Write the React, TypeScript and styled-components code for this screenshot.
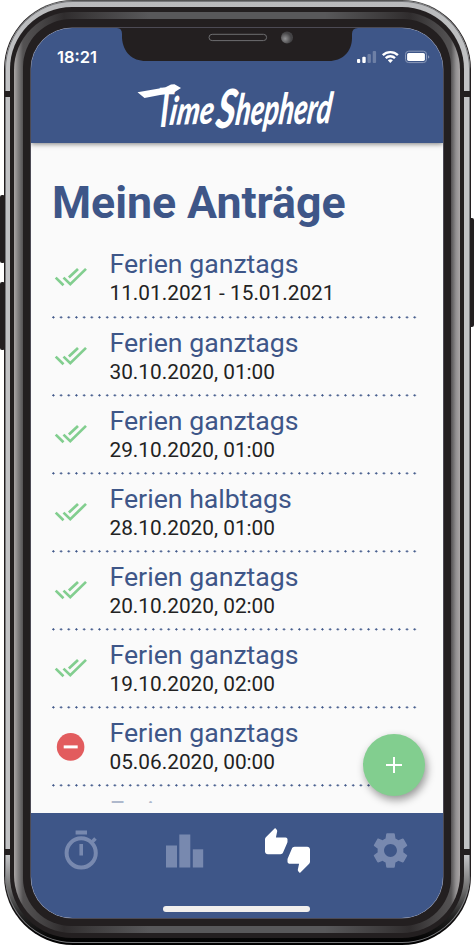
import React from "react";
import styled, { createGlobalStyle } from "styled-components";
import { MdSettings, MdThumbsUpDown } from "react-icons/md";

const navy = "#3e5688";
const green = "#82ce8f";
const ink = "#231f20";

const GlobalStyle = createGlobalStyle`
  * { box-sizing: border-box; }
  body { margin: 0; background: #fff; font-family: Roboto, "Noto Sans", sans-serif; }
`;

const Device = styled.main`
  position: relative;
  width: 474px;
  height: 946px;
  padding: 0 3.5px 0.5px;
  overflow: hidden;
`;

const SideKey = styled.i<{ $side: "left" | "right"; $top: number; $height: number }>`
  position: absolute;
  ${(p) => p.$side}: 0;
  top: ${(p) => p.$top}px;
  width: 5px;
  height: ${(p) => p.$height}px;
  border-radius: 2px;
  background: ${ink};
`;

const Edge = styled.div`
  position: relative;
  height: 945px;
  padding: 1px 1px 2px;
  border-radius: 69px;
  background: linear-gradient(#555 0, ${ink} 20px, ${ink} 880px, #000);
`;

const Steel = styled.div`
  height: 100%;
  padding: 5.5px 5.2px 5px;
  border-radius: 68px;
  background: linear-gradient(to bottom, #b9babc 0, #c1c2c4 60px, #c1c2c4 855px, #777 885px, #222 915px, #000 100%);
  box-shadow: inset 0 0 0 1px #77787b;
`;

const Antenna = styled.i<{ $side: "left" | "right"; $top: number }>`
  position: absolute;
  ${(p) => p.$side}: 0;
  top: ${(p) => p.$top}px;
  width: 7px;
  height: 6px;
  background: ${ink};
`;

const Casing = styled.div`
  height: 100%;
  padding: 5.5px 4.6px 5.5px;
  border-radius: 62px;
  background: ${ink};
`;

const Chamfer = styled.div`
  height: 100%;
  padding: 7px 8.7px;
  border-radius: 58px;
  background: linear-gradient(
    to right,
    #aaa6a6 0, #828081 4px, #545253 9px, #454344 28px, #302d2e 50px, #3d3b3c 75px, #58585a 135px,
    #58585a calc(100% - 135px), #3d3b3c calc(100% - 75px), #302d2e calc(100% - 50px),
    #454344 calc(100% - 28px), #545253 calc(100% - 9px), #929091 calc(100% - 4px), #aaa6a6 100%
  );
`;

const Bezel = styled.div`
  height: 100%;
  padding: 9px 8px;
  border-radius: 48px;
  background: ${ink};
`;

const Screen = styled.div`
  position: relative;
  display: flex;
  flex-direction: column;
  height: 890px;
  overflow: hidden;
  border-radius: 41px;
  background: #fafafa;
  box-shadow: 0 0 0 0.5px #778;
`;

const NotchShape = styled.svg`
  position: absolute;
  z-index: 3;
  left: 86px;
  top: 0;
`;

const Header = styled.header`
  position: relative;
  z-index: 2;
  display: flex;
  flex-direction: column;
  flex: 0 0 115.4px;
  background: ${navy};
  box-shadow: 0 1px 5px rgba(0, 0, 0, 0.5);
`;

const StatusBar = styled.div`
  display: flex;
  justify-content: space-between;
  align-items: center;
  height: 36px;
  margin-top: 11px;
  padding: 0 12px 0 26px;
  color: #fff;
`;

const Clock = styled.time`
  font: 600 16.5px/20px Inter, sans-serif;
  letter-spacing: 0;
`;

const Logo = styled.svg`
  width: 210px;
  height: 62px;
  margin-left: 99px;
  overflow: visible;
  fill: #fff;
  font-family: Lato, sans-serif;
  font-style: italic;
  font-weight: 900;
`;

const Content = styled.section`
  flex: 0 0 659.5px;
  height: 659.5px;
  padding: 34px 26px 0 21px;
  overflow: hidden;
`;

const Title = styled.h1`
  margin: 0;
  color: ${navy};
  font-size: 44.7px;
  font-weight: 700;
  line-height: 52px;
  letter-spacing: -0.04px;
  white-space: nowrap;
`;

const RequestList = styled.ul`
  margin: 13.6px 0 0;
  padding: 0;
  list-style: none;
`;

const RequestRow = styled.li`
  display: grid;
  grid-template-columns: 57.5px 1fr;
  height: 78.05px;
  padding-top: 6.5px;
  background: radial-gradient(circle at 1.4px 1.4px, ${navy} 0.8px, transparent 1.4px) 0 calc(100% - 2px) / 7.7px 3px repeat-x;
`;

const StateIcon = styled.svg`
  width: 36px;
  height: 30px;
  margin: 15px 0 0 1px;
`;

const Kind = styled.div`
  color: ${navy};
  font-size: 26.7px;
  line-height: 30.5px;
`;

const When = styled.div`
  margin-top: 1.5px;
  color: #222;
  font-size: 20.8px;
  line-height: 25px;
`;

const AddButton = styled.button`
  position: absolute;
  left: 332px;
  top: 706px;
  z-index: 2;
  display: grid;
  place-items: center;
  width: 62px;
  height: 62px;
  padding: 0;
  border: 0;
  border-radius: 50%;
  background: ${green};
  box-shadow: 2px 4px 8px rgba(0, 0, 0, 0.4);
`;

const Footer = styled.footer`
  display: flex;
  flex-direction: column;
  align-items: center;
  justify-content: space-between;
  flex: 0 0 105.1px;
  margin-top: auto;
  padding-bottom: 6.5px;
  background: ${navy};
`;

const Tabs = styled.nav`
  display: grid;
  grid-template-columns: repeat(4, 103px);
  width: 412px;
  height: 76px;
  margin-left: -1.2px;
`;

const Tab = styled.a<{ $active?: boolean }>`
  display: grid;
  place-items: center;
  color: ${(p) => (p.$active ? "#fff" : "#7889af")};
`;

const HomeIndicator = styled.div`
  width: 147px;
  height: 5.6px;
  margin-left: -1px;
  border-radius: 3px;
  background: #f1efed;
`;

type Request = { kind: string; when: string; rejected?: boolean };

const requests: Request[] = [
  { kind: "Ferien ganztags", when: "11.01.2021 - 15.01.2021" },
  { kind: "Ferien ganztags", when: "30.10.2020, 01:00" },
  { kind: "Ferien ganztags", when: "29.10.2020, 01:00" },
  { kind: "Ferien halbtags", when: "28.10.2020, 01:00" },
  { kind: "Ferien ganztags", when: "20.10.2020, 02:00" },
  { kind: "Ferien ganztags", when: "19.10.2020, 02:00" },
  { kind: "Ferien ganztags", when: "05.06.2020, 00:00", rejected: true },
];

const ClippedRow = styled.div`
  height: 16.2px;
  padding: 7px 0 0 57.5px;
  overflow: hidden;
  opacity: 0.4;
`;

function Approved() {
  return (
    <StateIcon viewBox="0 0 36 30" fill="none" stroke={green} strokeWidth="2.7">
      <path d="M2.7 13.6 10.5 21.2M10.5 13.6 17.3 20.2 33 4.9M15.9 13.6 25 4.9" />
    </StateIcon>
  );
}

function Rejected() {
  return (
    <StateIcon viewBox="0 0 36 30">
      <circle cx="17.6" cy="13.9" r="13.8" fill="#e25c5e" />
      <path d="M10.7 13.9h14" stroke="#fff" strokeWidth="3" />
    </StateIcon>
  );
}

function StatusIcons() {
  return (
    <svg width="74" height="14" viewBox="0 0 74 14">
      <g fill="#fff">
        <rect x="0" y="9" width="3.2" height="4" rx="1" />
        <rect x="5.3" y="6.7" width="3.4" height="6.3" rx="1" />
        <rect x="10.5" y="4" width="3.4" height="9" rx="1" opacity=".25" />
        <rect x="15.7" y="1" width="3.4" height="12" rx="1" opacity=".25" />
      </g>
      <g fill="none" stroke="#fff" strokeWidth="2.4">
        <path d="M25.8 5.1c4.1-4 11-4 15.1 0M28.7 8.1c2.6-2.5 6.7-2.5 9.3 0" />
      </g>
      <path d="M30.8 10.2c1.5-1.3 3.6-1.3 5.1 0L33.3 13z" fill="#fff" />
      <rect x="48.5" y="1.2" width="21" height="11.4" rx="3.2" fill="none" stroke="#8a99b9" />
      <rect x="50.1" y="2.9" width="17.8" height="8" rx="1.6" fill="#fff" />
      <path d="M71 5.2c1.8.4 1.8 3 0 3.4z" fill="#8a99b9" />
    </svg>
  );
}

function Brand() {
  return (
    <Logo viewBox="0 0 210 62" role="img" aria-label="Time Shepherd">
      <path d="M7.5 17.3 35 12.6 41 9.6 44.5 9.2 51 13 44 17.6 30 20 14.5 23Z" />
      <text transform="translate(26 52) skewX(-3)" fontSize="54" textLength="16" lengthAdjust="spacingAndGlyphs">T</text>
      <text transform="translate(38.5 50) rotate(-2) skewX(-10)" fontSize="39" textLength="44" lengthAdjust="spacingAndGlyphs">ime</text>
      <text transform="translate(84.5 53) skewX(-9)" fontSize="54" textLength="19" lengthAdjust="spacingAndGlyphs">S</text>
      <text transform="translate(104.5 50) rotate(-1) skewX(-8)" fontSize="43" textLength="96" lengthAdjust="spacingAndGlyphs">hepherd</text>
    </Logo>
  );
}

function Notch() {
  return (
    <NotchShape width="241" height="34" viewBox="0 0 241 34">
      <defs>
        <radialGradient id="lens" cx=".35" cy=".6">
          <stop stopColor="#929294" />
          <stop offset="1" stopColor="#444345" />
        </radialGradient>
      </defs>
      <path d="M0 0Q5 0 5 6V10C6 24 15 33 29 33H212C225 33 235 24 235 10V6Q235 0 241 0Z" fill={ink} />
      <rect x="92" y="6.3" width="57.6" height="6.3" rx="3.15" fill="#231f20" stroke="#6e6e70" />
      <circle cx="170" cy="9.5" r="6" fill="url(#lens)" />
    </NotchShape>
  );
}

function TimerIcon() {
  return (
    <svg width="38" height="42" viewBox="0 0 38 42" fill="none" stroke="currentColor" strokeWidth="4">
      <circle cx="18.2" cy="22.9" r="14.6" />
      <path d="M12.6 2.6H24" />
      <path d="M18.2 13.9v11.5M28.5 12.5l4-4" strokeWidth="3.6" />
    </svg>
  );
}

function StatsIcon() {
  return (
    <svg width="38" height="34" viewBox="0 0 38 34" fill="currentColor">
      <rect x="0" y="11.5" width="11" height="22" />
      <rect x="13.3" y="0.5" width="11" height="33" />
      <rect x="26.8" y="15.3" width="10.4" height="18.2" />
    </svg>
  );
}

export default function App() {
  return (
    <>
      <GlobalStyle />
      <Device>
        <SideKey $side="left" $top={195} $height={68} />
        <SideKey $side="left" $top={282} $height={68} />
        <SideKey $side="right" $top={218} $height={109} />
        <Edge>
          <Steel>
            <Casing>
              <Chamfer>
                <Bezel>
                  <Screen>
                    <Notch />
                    <Header>
                      <StatusBar>
                        <Clock>18:21</Clock>
                        <StatusIcons />
                      </StatusBar>
                      <Brand />
                    </Header>
                    <Content>
                      <Title>Meine Anträge</Title>
                      <RequestList>
                        {requests.map((r) => (
                          <RequestRow key={r.when}>
                            {r.rejected ? <Rejected /> : <Approved />}
                            <div>
                              <Kind>{r.kind}</Kind>
                              <When>{r.when}</When>
                            </div>
                          </RequestRow>
                        ))}
                      </RequestList>
                      <ClippedRow>
                        <Kind>Ferien</Kind>
                      </ClippedRow>
                    </Content>
                    <AddButton aria-label="Neuer Antrag">
                      <svg width="18" height="18" viewBox="0 0 18 18" stroke="#fff" strokeWidth="2">
                        <path d="M1 9h16M9 1v16" />
                      </svg>
                    </AddButton>
                    <Footer>
                      <Tabs>
                        <Tab><TimerIcon /></Tab>
                        <Tab><StatsIcon /></Tab>
                        <Tab $active><MdThumbsUpDown size={45} /></Tab>
                        <Tab><MdSettings size={43} /></Tab>
                      </Tabs>
                      <HomeIndicator />
                    </Footer>
                  </Screen>
                </Bezel>
              </Chamfer>
            </Casing>
          </Steel>
          <Antenna $side="left" $top={91} />
          <Antenna $side="right" $top={91} />
          <Antenna $side="left" $top={849} />
          <Antenna $side="right" $top={849} />
        </Edge>
      </Device>
    </>
  );
}
